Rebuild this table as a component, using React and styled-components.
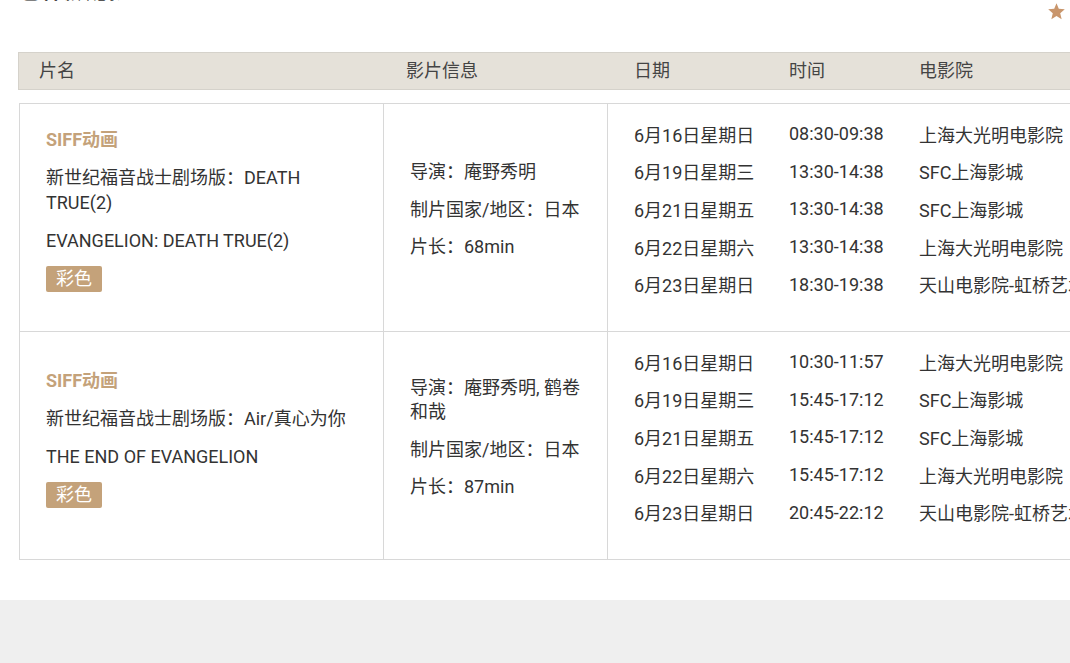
import styled, { createGlobalStyle } from "styled-components";

const GlobalStyle = createGlobalStyle`
  html, body {
    margin: 0;
    padding: 0;
    background: #efefef;
    overflow: hidden;
  }
  body {
    font-family: Roboto, "Noto Sans CJK SC", "Noto Sans", sans-serif;
    color: #333;
  }
`;

const Page = styled.div`
  width: 1070px;
  overflow: hidden;
  background: #efefef;
  min-height: 663px;
`;

const Sheet = styled.div`
  background: #fff;
  padding-bottom: 40px;
`;

const TopBar = styled.div`
  height: 52px;
  display: flex;
  justify-content: space-between;
  align-items: flex-start;
  padding: 0 4px 0 20px;
  box-sizing: border-box;
  overflow: hidden;
`;

const PageTitle = styled.div`
  margin-top: -19px;
  display: flex;
  align-items: baseline;
  gap: 4px;
  font-size: 20px;
  font-weight: 700;
  color: #111;
  line-height: 22px;
`;

const TitleNote = styled.span`
  font-size: 14px;
  font-weight: 400;
  color: #555;
`;

const Star = styled.svg`
  width: 19px;
  height: 19px;
  margin-top: 2px;
`;

const Table = styled.div`
  width: 1120px;
  margin-left: 18px;
`;

const HeadRow = styled.div`
  height: 38px;
  box-sizing: border-box;
  background: #e5e1d9;
  border: 1px solid #d5d2cb;
  display: grid;
  grid-template-columns: 367px 228px 155px 130px 1fr;
  align-items: center;
  padding: 0 0 4px 20px;
  font-size: 18px;
  color: #444;
`;

const Body = styled.div`
  margin-top: 13px;
  margin-left: 1px;
  border: 1px solid #d8d8d8;
`;

const Row = styled.div`
  display: grid;
  grid-template-columns: 364px 224px 1fr;
  border-top: ${(p) => (p.$first ? "none" : "1px solid #d8d8d8")};
`;

const Cell = styled.div`
  box-sizing: border-box;
  border-right: ${(p) => (p.$last ? "none" : "1px solid #d8d8d8")};
  padding: ${(p) => (p.$list ? "11px 0 28px 26px" : "0 16px 15px 26px")};
  display: flex;
  flex-direction: column;
  justify-content: center;
  font-size: 18px;
  min-width: 0;
`;

const Category = styled.div`
  font-weight: 700;
  color: #c4a27a;
  line-height: 25px;
`;

const Line = styled.div`
  line-height: ${(p) => p.$lh || "25px"};
  margin-top: ${(p) => p.$gap || "13px"};
  color: #333;
  width: ${(p) => (p.$narrow ? "180px" : "auto")};
  padding-right: ${(p) => (p.$narrow ? "0" : "4px")};
`;

const Badge = styled.span`
  align-self: flex-start;
  margin-top: 13px;
  height: 26px;
  line-height: 26px;
  padding: 0 10px;
  background: #c4a27a;
  color: #fff;
  border-radius: 2px;
`;

const Show = styled.div`
  display: grid;
  grid-template-columns: 155px 130px 1fr;
  height: 37.6px;
  align-items: center;
  white-space: nowrap;
`;

const films = [
  {
    zh: "新世纪福音战士剧场版：DEATH TRUE(2)",
    en: "EVANGELION: DEATH TRUE(2)",
    director: "导演：庵野秀明",
    length: "片长：68min",
    shows: [
      ["6月16日星期日", "08:30-09:38", "上海大光明电影院"],
      ["6月19日星期三", "13:30-14:38", "SFC上海影城"],
      ["6月21日星期五", "13:30-14:38", "SFC上海影城"],
      ["6月22日星期六", "13:30-14:38", "上海大光明电影院"],
      ["6月23日星期日", "18:30-19:38", "天山电影院-虹桥艺术中心"],
    ],
  },
  {
    zh: "新世纪福音战士剧场版：Air/真心为你",
    en: "THE END OF EVANGELION",
    director: "导演：庵野秀明, 鹤卷和哉",
    length: "片长：87min",
    shows: [
      ["6月16日星期日", "10:30-11:57", "上海大光明电影院"],
      ["6月19日星期三", "15:45-17:12", "SFC上海影城"],
      ["6月21日星期五", "15:45-17:12", "SFC上海影城"],
      ["6月22日星期六", "15:45-17:12", "上海大光明电影院"],
      ["6月23日星期日", "20:45-22:12", "天山电影院-虹桥艺术中心"],
    ],
  },
];

export default function App() {
  return (
    <Page>
      <GlobalStyle />
      <Sheet>
        <TopBar>
          <PageTitle>
            已看<TitleNote>影片记录</TitleNote>
          </PageTitle>
          <Star viewBox="0 0 24 24">
            <polygon
              points="12,1.5 14.9,8.6 22.5,9.2 16.7,14.2 18.5,21.8 12,17.7 5.5,21.8 7.3,14.2 1.5,9.2 9.1,8.6"
              fill="#c9966c"
            />
          </Star>
        </TopBar>
        <Table>
          <HeadRow>
            <span>片名</span>
            <span>影片信息</span>
            <span>日期</span>
            <span>时间</span>
            <span>电影院</span>
          </HeadRow>
          <Body>
            {films.map((f, i) => (
              <Row key={f.en} $first={i === 0}>
                <Cell>
                  <Category>SIFF动画</Category>
                  <Line>{f.zh}</Line>
                  <Line>{f.en}</Line>
                  <Badge>彩色</Badge>
                </Cell>
                <Cell>
                  <Line $narrow $lh="24px" $gap="0">
                    {f.director}
                  </Line>
                  <Line $narrow $lh="24px" $gap="13.5px">
                    制片国家/地区：日本
                  </Line>
                  <Line $narrow $lh="24px" $gap="13.5px">
                    {f.length}
                  </Line>
                </Cell>
                <Cell $list $last>
                  {f.shows.map((s) => (
                    <Show key={s[0]}>
                      <span>{s[0]}</span>
                      <span>{s[1]}</span>
                      <span>{s[2]}</span>
                    </Show>
                  ))}
                </Cell>
              </Row>
            ))}
          </Body>
        </Table>
      </Sheet>
    </Page>
  );
}
